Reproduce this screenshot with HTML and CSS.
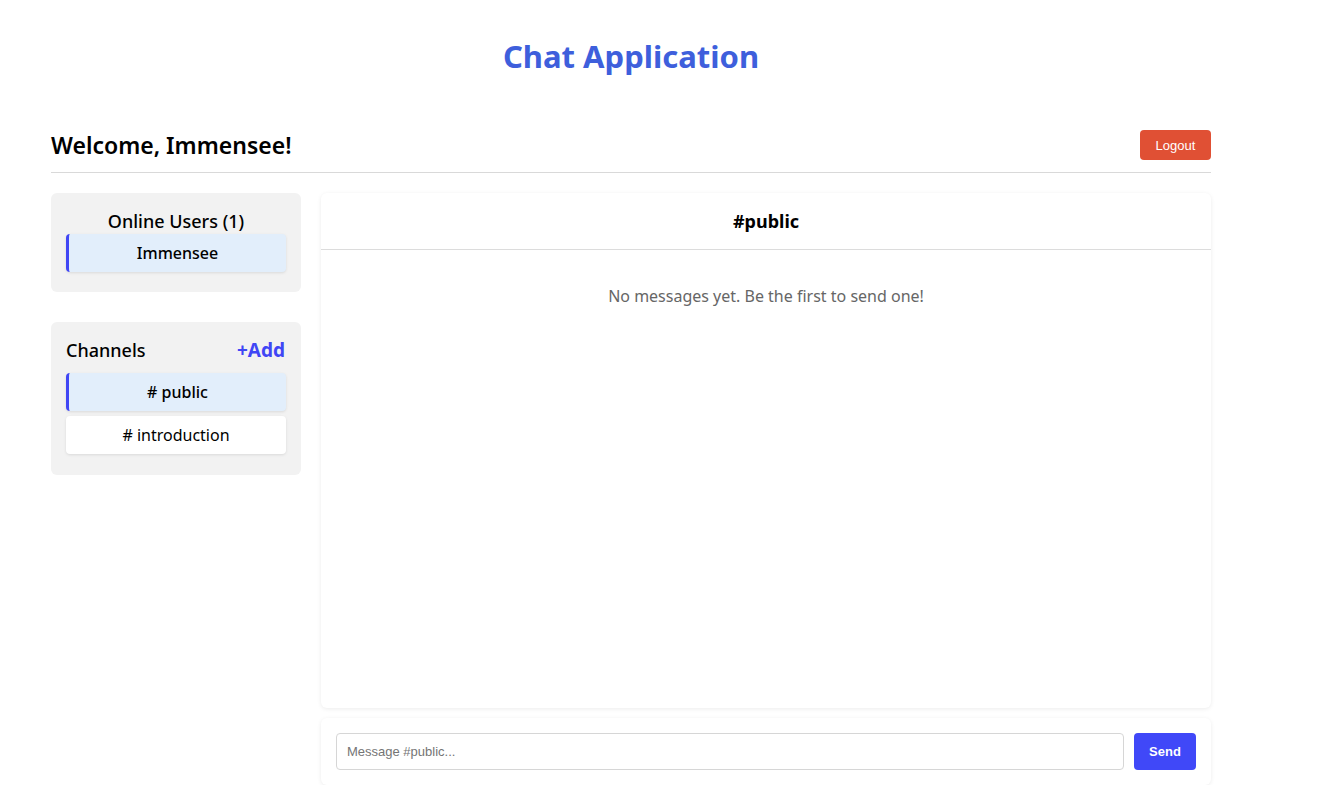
FILE: index.html
```html
<!DOCTYPE html>
<html lang="en">
<head>
<meta charset="utf-8">
<title>Chat Application</title>
<link rel="stylesheet" href="styles.css">
</head>
<body>
<div class="app">
  <h1 class="app-title">Chat Application</h1>
  <header class="topbar">
    <h2 class="welcome">Welcome, Immensee!</h2>
    <button class="logout">Logout</button>
  </header>
  <div class="layout">
    <aside class="sidebar">
      <section class="panel users">
        <h3 class="panel-title center">Online Users (1)</h3>
        <div class="item active">Immensee</div>
      </section>
      <section class="panel channels">
        <div class="panel-head">
          <h3 class="panel-title">Channels</h3>
          <span class="add">+Add</span>
        </div>
        <div class="item active">#&nbsp;public</div>
        <div class="item">#&nbsp;introduction</div>
      </section>
    </aside>
    <main class="chat">
      <section class="chat-box">
        <div class="chat-head">#public</div>
        <div class="chat-body">
          <p class="empty">No messages yet. Be the first to send one!</p>
        </div>
      </section>
      <form class="composer">
        <input class="msg-input" type="text" placeholder="Message #public...">
        <button class="send" type="button">Send</button>
      </form>
    </main>
  </div>
</div>
</body>
</html>
```
FILE: styles.css
```css
* { box-sizing: border-box; }
html, body { margin: 0; padding: 0; background: #fff; }
body {
  font-family: "Noto Sans", "Liberation Sans", Arial, sans-serif;
  color: #000;
}
.app {
  width: 1160px;
  margin-left: 51px;
  padding-top: 32px;
}
.app-title {
  margin: 0;
  text-align: center;
  font-size: 31px;
  font-weight: 700;
  color: #3e5fdc;
  line-height: 48px;
}
.topbar {
  display: flex;
  justify-content: space-between;
  align-items: center;
  margin-top: 50px;
  padding-bottom: 12px;
  border-bottom: 1px solid #d9d9d9;
}
.welcome {
  margin: 0;
  font-size: 23px;
  font-weight: 600;
  line-height: 30px;
}
.logout {
  width: 71px;
  height: 30px;
  border: none;
  border-radius: 4px;
  background: #e05034;
  color: #fff;
  font-family: "Liberation Sans", Arial, sans-serif;
  font-size: 13px;
  padding: 0;
}
.layout {
  display: flex;
  gap: 20px;
  margin-top: 20px;
}
.sidebar {
  width: 250px;
  flex: none;
  display: flex;
  flex-direction: column;
  gap: 30px;
}
.panel {
  background: #f2f2f2;
  border-radius: 6px;
  padding: 14px 15px 20px;
}
.panel-title {
  margin: 0;
  font-size: 18px;
  font-weight: 500;
  line-height: 28px;
}
.panel-title.center { text-align: center; margin-bottom: -1px; }
.users { padding-bottom: 20px; }
.channels { padding-top: 14px; padding-bottom: 21px; }
.panel-head {
  display: flex;
  justify-content: space-between;
  align-items: center;
  margin-bottom: 9px;
}
.add {
  font-size: 19px;
  font-weight: 700;
  color: #4046f5;
  margin-right: 1px;
}
.item {
  height: 38px;
  display: flex;
  align-items: center;
  justify-content: center;
  background: #fff;
  border-radius: 4px;
  box-shadow: 0 1px 3px rgba(0,0,0,0.1);
  font-size: 16px;
  margin-bottom: 5px;
}
.item:last-child { margin-bottom: 0; }
.item.active {
  background: #e2eefb;
  border-left: 3px solid #4046f5;
  font-weight: 500;
}
.chat {
  flex: 1;
  display: flex;
  flex-direction: column;
  gap: 10px;
}
.chat-box {
  height: 515px;
  background: #fff;
  border-radius: 6px;
  box-shadow: 0 1px 4px rgba(0,0,0,0.08);
  display: flex;
  flex-direction: column;
}
.chat-head {
  height: 57px;
  display: flex;
  align-items: center;
  justify-content: center;
  font-size: 18px;
  font-weight: 700;
  border-bottom: 1px solid #dcdcdc;
}
.chat-body { flex: 1; padding: 35px 15px 0; }
.empty {
  margin: 0;
  text-align: center;
  color: #666;
  font-size: 16px;
  line-height: 22px;
}
.composer {
  margin: 0;
  height: 67px;
  background: #fff;
  border-radius: 6px;
  box-shadow: 0 1px 4px rgba(0,0,0,0.08);
  padding: 15px;
  display: flex;
  gap: 10px;
}
.msg-input {
  flex: 1;
  height: 37px;
  border: 1px solid #d6d6d6;
  border-radius: 4px;
  padding: 0 10px;
  font-family: "Liberation Sans", Arial, sans-serif;
  font-size: 13px;
  color: #333;
}
.msg-input::placeholder { color: #757575; }
.send {
  width: 62px;
  height: 37px;
  border: none;
  border-radius: 4px;
  background: #4048f8;
  color: #fff;
  font-family: "Liberation Sans", Arial, sans-serif;
  font-size: 13px;
  font-weight: 600;
  padding: 0;
}
```
